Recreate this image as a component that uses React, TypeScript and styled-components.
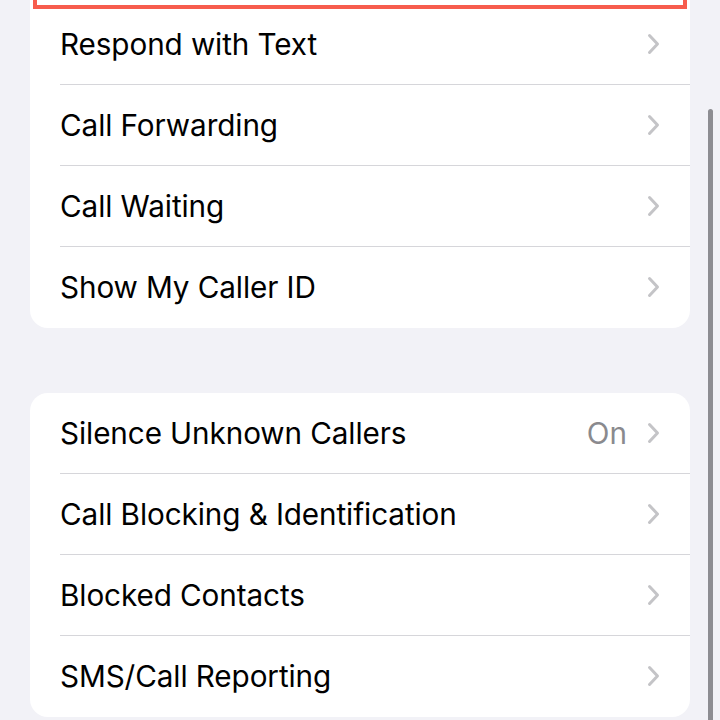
import React from 'react'
import styled, { createGlobalStyle } from 'styled-components'

const GlobalStyle = createGlobalStyle`
html, body {
  margin: 0;
  padding: 0;
  background: #f2f2f7;
  font-family: Inter, "Noto Sans", "Liberation Sans", sans-serif;
  -webkit-font-smoothing: antialiased;
}
`

const Page = styled.div`
  position: relative;
  width: 720px;
  height: 720px;
  overflow: hidden;
  background: #f2f2f7;
`

const Scroll = styled.div`
  display: flex;
  flex-direction: column;
  gap: 65px;
  padding: 0 30px;
`

// the first card continues above the top edge, so it has no top corners
const Card = styled.div<{ $cutTop?: boolean }>`
  position: relative;
  background: #ffffff;
  border-radius: ${(p) => (p.$cutTop ? '0 0 18px 18px' : '18px')};
  padding-top: ${(p) => (p.$cutTop ? '4px' : '0')};
  overflow: hidden;
`

const Row = styled.div`
  padding-left: 30px;
`

const Content = styled.div<{ $last?: boolean }>`
  height: 80px;
  display: flex;
  align-items: center;
  padding-right: 30px;
  border-bottom: ${(p) => (p.$last ? '1px solid transparent' : '1px solid #d6d6da')};
`

const Label = styled.div`
  flex: 1;
  font-size: 29.7px;
  line-height: 1;
  padding-top: 2px;
  color: #000000;
  letter-spacing: -0.1px;
`

const Value = styled.div`
  font-size: 29.7px;
  line-height: 1;
  padding-top: 2px;
  color: #8a8a8e;
  margin-right: 20px;
`

const Highlight = styled.div`
  position: absolute;
  left: 3px;
  right: 3px;
  top: -20px;
  height: 29px;
  box-sizing: border-box;
  border: 4px solid #f75c4d;
  pointer-events: none;
`

const ScrollBar = styled.div`
  position: absolute;
  right: 7px;
  top: 109px;
  bottom: -10px;
  width: 5px;
  border-radius: 3px;
  background: #8d8d92;
`

const Chevron = () => (
  <svg width="13" height="22" viewBox="0 0 13 22">
    <path
      d="M2.5 2.5 L10.5 11 L2.5 19.5"
      fill="none"
      stroke="#c4c4c7"
      strokeWidth="3"
      strokeLinecap="round"
      strokeLinejoin="round"
    />
  </svg>
)

type Item = { label: string; value?: string }

const first: Item[] = [
  { label: 'Respond with Text' },
  { label: 'Call Forwarding' },
  { label: 'Call Waiting' },
  { label: 'Show My Caller ID' },
]

const second: Item[] = [
  { label: 'Silence Unknown Callers', value: 'On' },
  { label: 'Call Blocking & Identification' },
  { label: 'Blocked Contacts' },
  { label: 'SMS/Call Reporting' },
]

const Group = ({ items, cutTop }: { items: Item[]; cutTop?: boolean }) => (
  <Card $cutTop={cutTop}>
    {cutTop && <Highlight />}
    {items.map((it, i) => (
      <Row key={it.label}>
        <Content $last={i === items.length - 1}>
          <Label>{it.label}</Label>
          {it.value && <Value>{it.value}</Value>}
          <Chevron />
        </Content>
      </Row>
    ))}
  </Card>
)

export default function App() {
  return (
    <>
      <GlobalStyle />
      <Page>
        <Scroll>
          <Group items={first} cutTop />
          <Group items={second} />
        </Scroll>
        <ScrollBar />
      </Page>
    </>
  )
}
